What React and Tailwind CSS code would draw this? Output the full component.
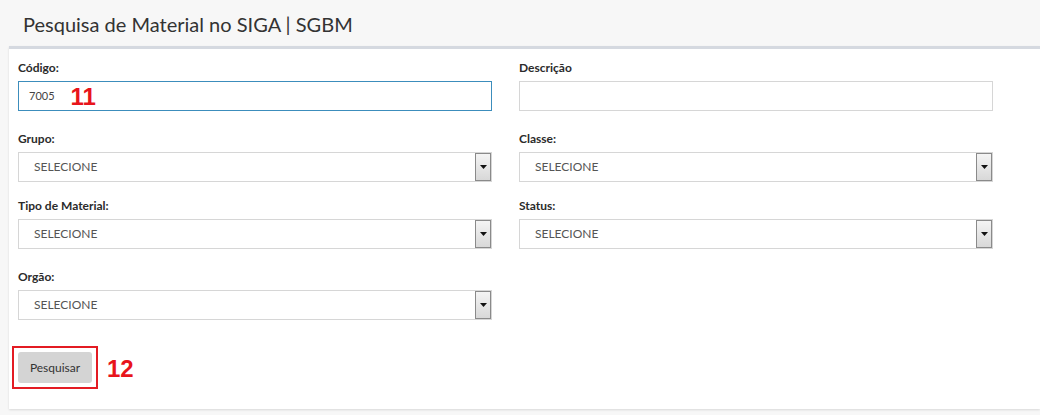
import React from "react";

const font = { fontFamily: "Lato, 'Open Sans', sans-serif" };

function Label({ children }) {
  return (
    <div className="h-4 leading-4 text-[12px] font-bold text-[#2b2b2b] mb-[5px]">{children}</div>
  );
}

function Select() {
  return (
    <div className="relative h-[30px] border border-[#d6d6d6] bg-white flex items-center">
      <span className="pl-[15px] text-[12px] text-[#555]">SELECIONE</span>
      <div className="absolute right-0 top-0 bottom-0 w-[16px] border border-[#8a8a8a] bg-gradient-to-b from-[#f4f4f4] to-[#d8d8d8] flex items-center justify-center">
        <svg width="7" height="4" viewBox="0 0 7 4">
          <path d="M0 0 L7 0 L3.5 4 Z" fill="#111" />
        </svg>
      </div>
    </div>
  );
}

export default function App() {
  return (
    <div className="w-[1040px] h-[415px] overflow-hidden bg-[#f7f7f7]" style={font}>
      <div className="h-[46px] pl-[23px] flex items-center text-[20px] text-[#333] pt-[1px]">
        Pesquisa de Material no SIGA | SGBM
      </div>
      <div className="ml-[9px] h-[363px] border-t-[3px] border-[#d5d9e0] bg-white shadow-[0_1px_2px_rgba(0,0,0,0.12)] pl-[9px] pt-[11px]">
        <div className="grid grid-cols-[474px_474px] gap-x-[27px]">
          <div>
            <Label>Código:</Label>
            <div className="h-[30px] border border-[#3c8dbc] flex items-center pl-[10px]">
              <span className="text-[11px] text-[#444]">7005</span>
              <span className="ml-[16px] mt-[2px] text-[24px] font-bold text-[#e8141b] leading-none" style={{ fontFamily: "'Liberation Sans', Arial, sans-serif" }}>11</span>
            </div>
          </div>
          <div>
            <Label>Descrição</Label>
            <div className="h-[30px] border border-[#d6d6d6] bg-white" />
          </div>

          <div className="mt-[20px]">
            <Label>Grupo:</Label>
            <Select />
          </div>
          <div className="mt-[20px]">
            <Label>Classe:</Label>
            <Select />
          </div>

          <div className="mt-[16px]">
            <Label>Tipo de Material:</Label>
            <Select />
          </div>
          <div className="mt-[16px]">
            <Label>Status:</Label>
            <Select />
          </div>

          <div className="mt-[20px]">
            <Label>Orgão:</Label>
            <Select />
          </div>
          <div />
        </div>

        <div className="mt-[26px] flex items-center">
          <div className="ml-[-6px] border-2 border-[#e31b23] p-[4px]">
            <button className="w-[74px] h-[31px] rounded-[3px] bg-[#d4d4d4] text-[12px] text-[#333]">Pesquisar</button>
          </div>
          <span className="ml-[9px] mt-[2px] text-[24px] font-bold text-[#e8141b] leading-none" style={{ fontFamily: "'Liberation Sans', Arial, sans-serif" }}>12</span>
        </div>
      </div>
    </div>
  );
}
